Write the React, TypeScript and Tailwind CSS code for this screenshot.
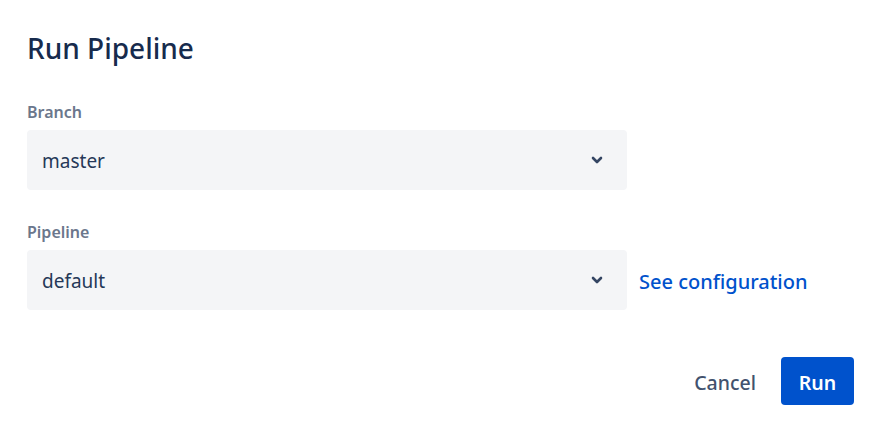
import React from 'react'

function Chevron() {
  return (
    <svg width="12" height="8" viewBox="0 0 12 8" className="text-[#344563]">
      <path d="M2 2l4 4 4-4" fill="none" stroke="currentColor" strokeWidth="2.6" strokeLinecap="round" strokeLinejoin="round" />
    </svg>
  )
}

function SelectBox({ value }: { value: string }) {
  return (
    <div className="flex h-[60px] w-[600px] items-center justify-between rounded-[4px] bg-[#f4f5f7] pl-[15px] pr-[24px]">
      <span className="pt-[3px] text-[19px] text-[#253858]">{value}</span>
      <Chevron />
    </div>
  )
}

export default function App() {
  return (
    <div className="h-[424px] w-[879px] bg-white pl-[27px] pr-[25px] pt-[28px] font-['Noto_Sans',sans-serif]">
      <h1 className="text-[28px] font-medium leading-[40px] text-[#172b4d]">Run Pipeline</h1>

      <div className="mt-[34px]">
        <label className="block text-[16px] font-semibold leading-[20px] text-[#6b778c]">Branch</label>
        <div className="mt-[8px]">
          <SelectBox value="master" />
        </div>
      </div>

      <div className="mt-[32px]">
        <label className="block text-[16px] font-semibold leading-[20px] text-[#6b778c]">Pipeline</label>
        <div className="mt-[8px] flex items-center gap-[12px]">
          <SelectBox value="default" />
          <a className="pt-[3px] text-[20px] font-medium text-[#0052cc]">See configuration</a>
        </div>
      </div>

      <div className="mt-[47px] flex items-center justify-end gap-[13px]">
        <button className="h-[48px] px-[12px] pt-[3px] text-[19.5px] font-medium text-[#42526e]">Cancel</button>
        <button className="h-[48px] w-[73px] rounded-[4px] bg-[#0052cc] pt-[3px] text-[19.5px] font-semibold text-white">Run</button>
      </div>
    </div>
  )
}
